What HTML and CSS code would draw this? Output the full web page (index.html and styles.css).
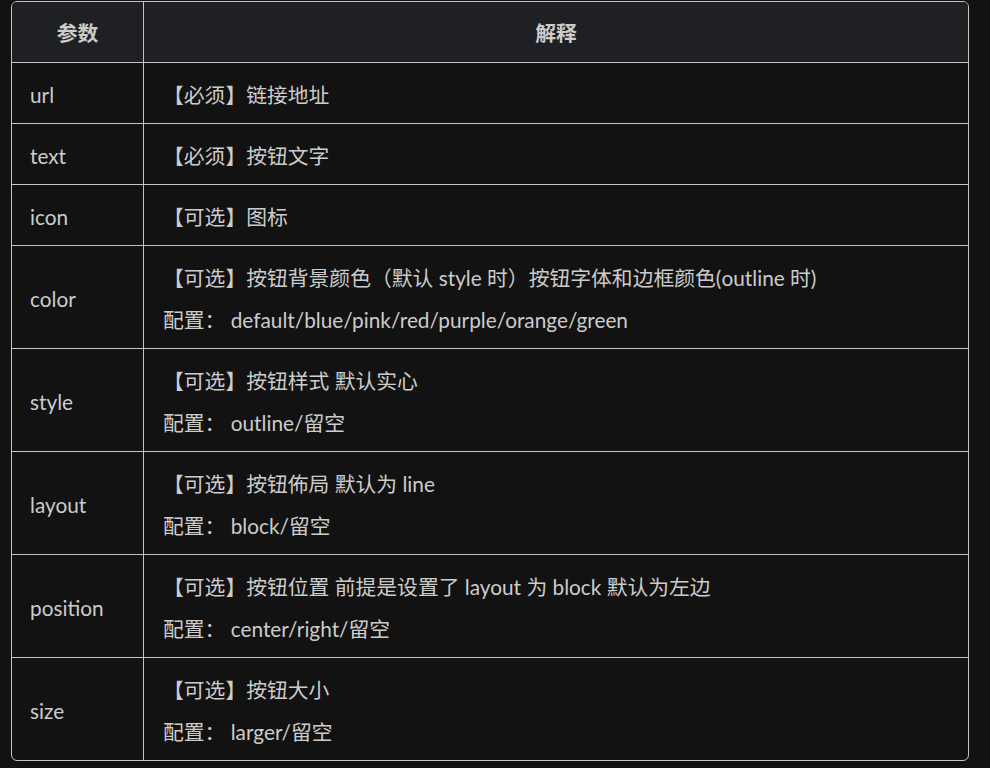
FILE: index.html
```html
<!DOCTYPE html>
<html lang="zh-CN">
<head>
<meta charset="utf-8">
<title>参数</title>
<link rel="stylesheet" href="styles.css">
</head>
<body>
<div class="table-wrap">
  <table class="params">
    <thead>
      <tr><th class="col-name">参数</th><th class="col-desc">解释</th></tr>
    </thead>
    <tbody>
      <tr><td class="col-name">url</td><td class="col-desc"><div class="line">【必须】链接地址</div></td></tr>
      <tr><td class="col-name">text</td><td class="col-desc"><div class="line">【必须】按钮文字</div></td></tr>
      <tr><td class="col-name">icon</td><td class="col-desc"><div class="line">【可选】图标</div></td></tr>
      <tr><td class="col-name">color</td><td class="col-desc"><div class="line">【可选】按钮背景颜色（默认 style 时）按钮字体和边框颜色(outline 时)</div><div class="line">配置： default/blue/pink/red/purple/orange/green</div></td></tr>
      <tr><td class="col-name">style</td><td class="col-desc"><div class="line">【可选】按钮样式 默认实心</div><div class="line">配置： outline/留空</div></td></tr>
      <tr><td class="col-name">layout</td><td class="col-desc"><div class="line">【可选】按钮佈局 默认为 line</div><div class="line">配置： block/留空</div></td></tr>
      <tr><td class="col-name">position</td><td class="col-desc"><div class="line">【可选】按钮位置 前提是设置了 layout 为 block 默认为左边</div><div class="line">配置： center/right/留空</div></td></tr>
      <tr class="last"><td class="col-name">size</td><td class="col-desc"><div class="line">【可选】按钮大小</div><div class="line">配置： larger/留空</div></td></tr>
    </tbody>
  </table>
</div>
</body>
</html>
```
FILE: styles.css
```css
html, body {
  background: #121212;
}
body {
  margin: 1px 0 0 11px;
  font-family: Lato, "Noto Sans CJK SC", sans-serif;
  font-size: 20.8px;
  color: #cccccc;
}
.table-wrap {
  width: 958px;
  box-sizing: border-box;
  border: 1px solid #c4c4c4;
  border-radius: 6px;
  overflow: hidden;
}
.params {
  width: 100%;
  border-collapse: separate;
  border-spacing: 0;
  table-layout: fixed;
}
.params th, .params td {
  border-bottom: 1px solid #c4c4c4;
  padding: 16px 18px 13px;
  line-height: 31px;
  text-align: left;
  vertical-align: middle;
}
.params tr.last td {
  border-bottom: none;
}
.params th {
  background: #1f2023;
  font-weight: bold;
  text-align: center;
  height: 31px;
  padding: 15px 18px 14px;
}
.params .col-name {
  width: 95px;
  border-right: 1px solid #c4c4c4;
}
.params td.col-desc {
  padding-left: 19px;
}
.line + .line {
  margin-top: 11px;
}
```
